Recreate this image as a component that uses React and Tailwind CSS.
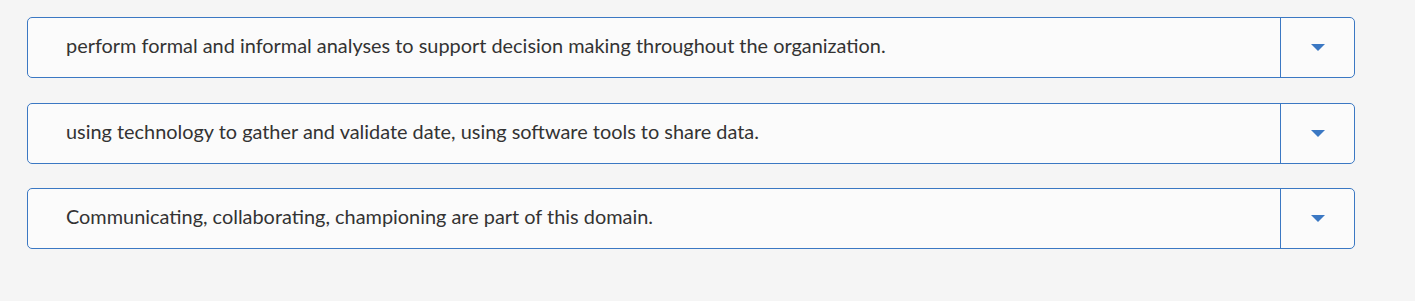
import React from 'react';

const items = [
  'perform formal and informal analyses to support decision making throughout the organization.',
  'using technology to gather and validate date, using software tools to share data.',
  'Communicating, collaborating, championing are part of this domain.',
];

function Row({ text, className }) {
  return (
    <div className={`flex h-[61px] w-[1328px] rounded-[5px] border border-[#3b78c3] bg-[#fbfbfb] ${className}`}>
      <div className="flex flex-1 items-center pb-[3px] pl-[38px] text-[19.9px] text-[#333]">{text}</div>
      <div className="flex w-[74px] items-center justify-center border-l border-[#3b78c3]">
        <svg width="14" height="7" viewBox="0 0 14 7">
          <path d="M0 0h14L7 7z" fill="#3b78c3" />
        </svg>
      </div>
    </div>
  );
}

export default function App() {
  return (
    <div
      className="h-[301px] w-full bg-[#f5f5f5] pl-[27px] pt-[17px]"
      style={{ fontFamily: 'Lato, sans-serif' }}
    >
      <div className="flex flex-col">
        <Row text={items[0]} className="" />
        <Row text={items[1]} className="mt-[25px]" />
        <Row text={items[2]} className="mt-[24px]" />
      </div>
    </div>
  );
}
